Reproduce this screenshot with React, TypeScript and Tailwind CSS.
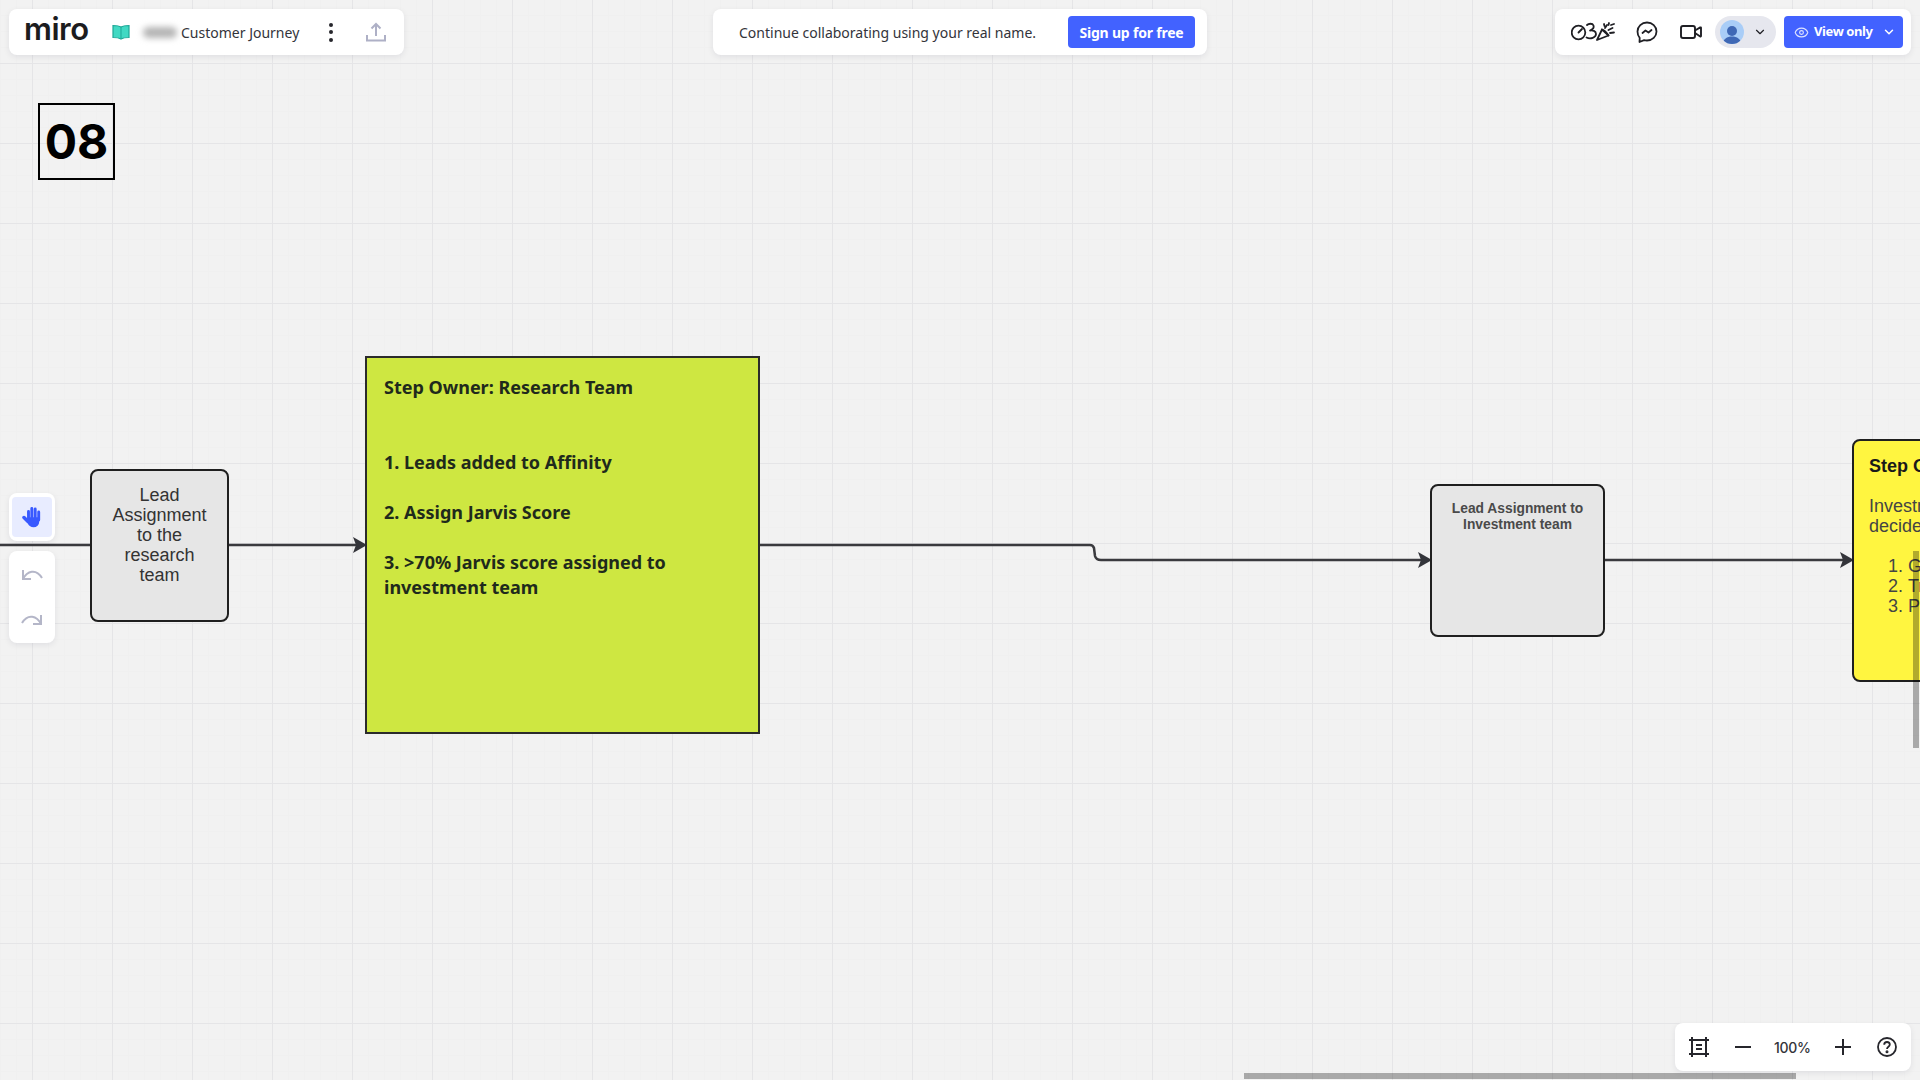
import React from 'react';
import { ChevronDown, Eye, Video } from 'lucide-react';

const noto = "font-['Noto_Sans',sans-serif]";
const arial = "font-['Liberation_Sans',Arial,sans-serif]";

// Top left panel
const BoardPanel = () => (
  <div className="flex h-[46px] w-[395px] shrink-0 items-center rounded-lg bg-white shadow-[0_2px_6px_rgba(5,0,56,0.08)]">
    <span className="-mt-[6px] ml-[15px] w-[74px] font-['Inter',sans-serif] text-[31px] leading-[46px] font-semibold tracking-[-0.5px] text-[#1c1c1e]">miro</span>
    <svg className="ml-[14px]" width="18" height="16" viewBox="0 0 18 16">
      <path d="M1 1.5c3 0 6 .3 8 1.5 2-1.200 5-1.500 8-1.500v12c-3 0-6 .3-8 1.500-2-1.200-5-1.500-8-1.500z" fill="#41d9c3" stroke="#1fa797" strokeWidth="1.200" />
      <path d="M9 3v12" stroke="#1fa797" strokeWidth="1" />
    </svg>
    <div className="ml-[8px] flex h-[22px] w-[43px] items-center justify-center">
      <div className="h-[11px] w-[34px] rounded-full bg-[#b4b4b4] blur-[3px]" />
    </div>
    <span className={`${noto} text-[14px] text-[#33343a]`}>Customer Journey</span>
    <div className="ml-[30px] flex flex-col gap-[3.500px]">
      <div className="h-[4px] w-[4px] rounded-full bg-[#26262c]" />
      <div className="h-[4px] w-[4px] rounded-full bg-[#26262c]" />
      <div className="h-[4px] w-[4px] rounded-full bg-[#26262c]" />
    </div>
    <svg className="ml-[32px]" width="22" height="22" viewBox="0 0 22 22" fill="none" stroke="#aeb0c6" strokeWidth="2">
      <path d="M11 15V3M6.500 7.500 11 3l4.500 4.500M2 14v5.500h18V14" />
    </svg>
  </div>
);

const SignupPanel = () => (
  <div className="ml-[309px] flex h-[46px] w-[494px] shrink-0 items-center rounded-lg bg-white pl-[26px] shadow-[0_2px_6px_rgba(5,0,56,0.08)]">
    <span className={`${noto} w-[329px] text-[14px] text-[#33343a]`}>Continue collaborating using your real name.</span>
    <button className={`${noto} h-[32px] w-[127px] rounded bg-[#4262ff] text-[14px] font-bold tracking-[-0.2px] text-white`}>Sign up for free</button>
  </div>
);

const TimerIcon = () => (
  <svg width="44" height="24" viewBox="0 0 44 24" fill="none" stroke="#1f1f24" strokeWidth="1.800" strokeLinecap="round" strokeLinejoin="round">
    <circle cx="7.500" cy="12.500" r="6.800" />
    <path d="M7.500 12.500l3.500-3.500" />
    <path d="M16 5c1.500-1.500 5.500-2 6.500 .5 .7 2-1 4-3.500 5 2.500-.5 6 .5 6 3.500 0 3.500-5.500 5.500-9.500 3.500" />
    <path d="M26 20l5-10.500 6.500 6z" />
    <path d="M31 9.500c2 .5 5 3.500 6.500 6" />
    <path d="M34 8l2-3M33 4l.5 2M38 3l-.5 2M40 5l3-1M37.500 10l4-2M39 13l4-.5" />
  </svg>
);

const ChatIcon = () => (
  <svg width="22" height="22" viewBox="0 0 22 22" fill="none" stroke="#1f1f24" strokeWidth="1.800" strokeLinecap="round" strokeLinejoin="round">
    <path d="M11 1.500c5.300 0 9.500 3.900 9.500 9s-4.200 9-9.500 9c-1 0-2-.1-2.900-.4L3.500 21l.2-4.100C2.200 15.300 1.500 13 1.500 10.500c0-5.100 4.200-9 9.500-9z" />
    <path d="M6.500 12l3-2.500 3 2 3-2.500" />
  </svg>
);

const RightPanel = () => (
  <div className="ml-auto flex h-[46px] w-[356px] shrink-0 items-center rounded-lg bg-white shadow-[0_2px_6px_rgba(5,0,56,0.08)]">
    <div className="ml-[16px]"><TimerIcon /></div>
    <div className="ml-[21px]"><ChatIcon /></div>
    <Video className="ml-[21px] text-[#1f1f24]" size={24} strokeWidth={1.900} />
    <div className="ml-[12px] flex h-[32px] w-[61px] shrink-0 items-center rounded-full bg-[#e6e7ee] pl-[5px]">
      <div className="flex h-[24px] w-[24px] items-end justify-center overflow-hidden rounded-full bg-[#a9cdf7]">
        <svg width="20" height="20" viewBox="0 0 20 20" fill="#3f68b5">
          <circle cx="10" cy="7" r="5" />
          <path d="M1 20c0-5 4-7.500 9-7.500s9 2.500 9 7.500z" />
        </svg>
      </div>
      <ChevronDown className="ml-[9px] text-[#1f1f24]" size={14} strokeWidth={2} />
    </div>
    <button className={`${noto} ml-[8px] flex h-[32px] w-[119px] shrink-0 items-center rounded bg-[#4262ff] pl-[10px] text-[13px] font-bold tracking-[-0.4px] text-white`}>
      <Eye size={15} strokeWidth={1.800} className="mr-[5px] text-[#dfe4ff]" />
      View only
      <ChevronDown size={14} strokeWidth={2.500} className="ml-[9px]" />
    </button>
  </div>
);

// Left side tool panels
const ToolPanels = () => (
  <div className="absolute left-[9px] top-[493px] flex w-[46px] flex-col gap-[10px]">
    <div className="rounded-lg bg-white px-[3px] py-[4px] shadow-[0_2px_6px_rgba(5,0,56,0.08)]">
      <div className="flex h-[40px] w-[40px] items-center justify-center rounded bg-[#e8ecff]">
        <svg width="20" height="22" viewBox="0 0 20 22" fill="none" stroke="#3859ff" strokeLinecap="round" strokeLinejoin="round">
          <path d="M6.500 5.500v8M9.800 2.500v9M13.200 3v9M16.700 6v8" strokeWidth="2.900" />
          <path d="M2 11.500l4 4" strokeWidth="3.500" />
          <path d="M6.500 12h10v3.500c0 3-2.200 5-5 5-2.500 0-4-1.200-5-3z" fill="#3859ff" strokeWidth="1.500" />
        </svg>
      </div>
    </div>
    <div className="flex h-[92px] flex-col items-center justify-center gap-[32px] rounded-lg bg-white shadow-[0_2px_6px_rgba(5,0,56,0.08)]">
      <svg width="22" height="12" viewBox="0 0 22 12" fill="none" stroke="#b4b6c8" strokeWidth="2">
        <path d="M2 1v9h8M2 10C6 2 15 -1 21 9" />
      </svg>
      <svg width="22" height="12" viewBox="0 0 22 12" fill="none" stroke="#b4b6c8" strokeWidth="2">
        <path d="M20 2v9h-8M20 11C16 3 7 0 1 10" />
      </svg>
    </div>
  </div>
);

const ZoomPanel = () => (
  <div className="absolute left-[1675px] top-[1023px] flex h-[48px] w-[236px] items-center rounded-lg bg-white shadow-[0_2px_6px_rgba(5,0,56,0.08)]">
    <svg className="ml-[14px]" width="20" height="20" viewBox="0 0 20 20" fill="none" stroke="#26262c" strokeWidth="2">
      <path d="M3 0v20M17 0v20M0 3h20M0 17h20M7 8h6M7 12h6" />
    </svg>
    <div className="ml-[26px] h-[2px] w-[16px] bg-[#26262c]" />
    <span className="ml-[23px] w-[36px] text-center font-['Inter',sans-serif] text-[14px] font-medium tracking-[-0.3px] whitespace-nowrap text-[#33343a]">100%</span>
    <svg className="ml-[25px]" width="16" height="16" viewBox="0 0 16 16" stroke="#26262c" strokeWidth="2">
      <path d="M8 0v16M0 8h16" />
    </svg>
    <svg className="ml-[26px]" width="20" height="20" viewBox="0 0 20 20" fill="none" stroke="#26262c" strokeWidth="1.800">
      <circle cx="10" cy="10" r="9" />
      <path d="M7.200 7.800C7.200 6 8.500 5 10 5s2.800 1 2.800 2.600c0 2.200-2.800 2.200-2.800 4.400" />
      <circle cx="10" cy="14.800" r="0.600" fill="#26262c" />
    </svg>
  </div>
);

// Lines between the nodes, drawn over the whole board
const Connectors = () => (
  <svg className="absolute left-0 top-0" width="1920" height="1080" fill="none">
    <g stroke="#3a3a3e" strokeWidth="2.500">
      <path d="M0 545H91" />
      <path d="M229 545H356" />
      <path d="M759 545H1090q3 0 4 3l1 8q1 4 6 4H1422" />
      <path d="M1604 560H1844" />
    </g>
    <g fill="#33343a">
      <path d="M367 545l-14-8 3 8-3 8z" />
      <path d="M1432 560l-14-8 3 8-3 8z" />
      <path d="M1854 560l-14-8 3 8-3 8z" />
    </g>
  </svg>
);

export default function App() {
  return (
    <div className="relative h-[1080px] w-[1920px] overflow-hidden bg-[#f2f2f2] bg-[linear-gradient(to_right,#e5e5e7_1px,transparent_1px),linear-gradient(to_bottom,#e5e5e7_1px,transparent_1px),linear-gradient(to_right,#f0f0f0_1px,transparent_1px),linear-gradient(to_bottom,#f0f0f0_1px,transparent_1px)] bg-[size:80px_80px,80px_80px,16px_16px,16px_16px] bg-[position:32px_63px,32px_63px,0px_15px,0px_15px]">
      <Connectors />

      {/* frame number */}
      <div className="absolute left-[38px] top-[103px] flex h-[77px] w-[77px] items-center justify-center border-2 border-black font-['Inter',sans-serif] text-[48px] font-bold text-black">
        08
      </div>

      {/* nodes */}
      <div className={`${arial} absolute left-[90px] top-[469px] h-[153px] w-[139px] rounded-[8px] border-2 border-[#1f1f1f] bg-[#e6e6e6] px-[16px] pt-[14px] text-center text-[18px] leading-[20px] text-[#333]`}>
        Lead Assignment to the research team
      </div>

      <div className={`${noto} absolute left-[365px] top-[356px] h-[378px] w-[395px] border-2 border-[#2b2b2b] bg-[#cee741] pl-[17px] pr-[40px] pt-[17px] text-[18px] leading-[25px] font-bold text-[#1f2a1c]`}>
        <p className="mb-[50px]">Step Owner: Research Team</p>
        <p className="mb-[25px]">1. Leads added to Affinity</p>
        <p className="mb-[25px]">2. Assign Jarvis Score</p>
        <p>3. &gt;70% Jarvis score assigned to investment team</p>
      </div>

      <div className={`${arial} absolute left-[1430px] top-[484px] h-[153px] w-[175px] rounded-[8px] border-2 border-[#1f1f1f] bg-[#e6e6e6] px-[12px] pt-[15px] text-center text-[13.800px] leading-[16px] font-bold text-[#4a4a4a]`}>
        Lead Assignment to Investment team
      </div>

      <div className={`${arial} absolute left-[1852px] top-[439px] h-[243px] w-[300px] rounded-[8px] border-2 border-[#1f1f1f] bg-[#fff540] pl-[15px] pt-[15px] text-[18px] leading-[20px] text-[#444]`}>
        <p className="mb-[20px] font-bold text-[#1a1a1a]">Step Owner</p>
        <p className="mb-[20px] w-[200px]">Investment team decides</p>
        <ol className="list-decimal pl-[39px]">
          <li>Go</li>
          <li>Track</li>
          <li>Pass</li>
        </ol>
      </div>

      {/* top bars */}
      <div className="absolute left-[9px] right-[9px] top-[9px] flex">
        <BoardPanel />
        <SignupPanel />
        <RightPanel />
      </div>

      <ToolPanels />
      <ZoomPanel />

      {/* scrollbars */}
      <div className="absolute left-[1913px] top-[551px] h-[197px] w-[6px] bg-black/30" />
      <div className="absolute left-[1244px] top-[1073px] h-[6px] w-[552px] bg-black/30" />
    </div>
  );
}
